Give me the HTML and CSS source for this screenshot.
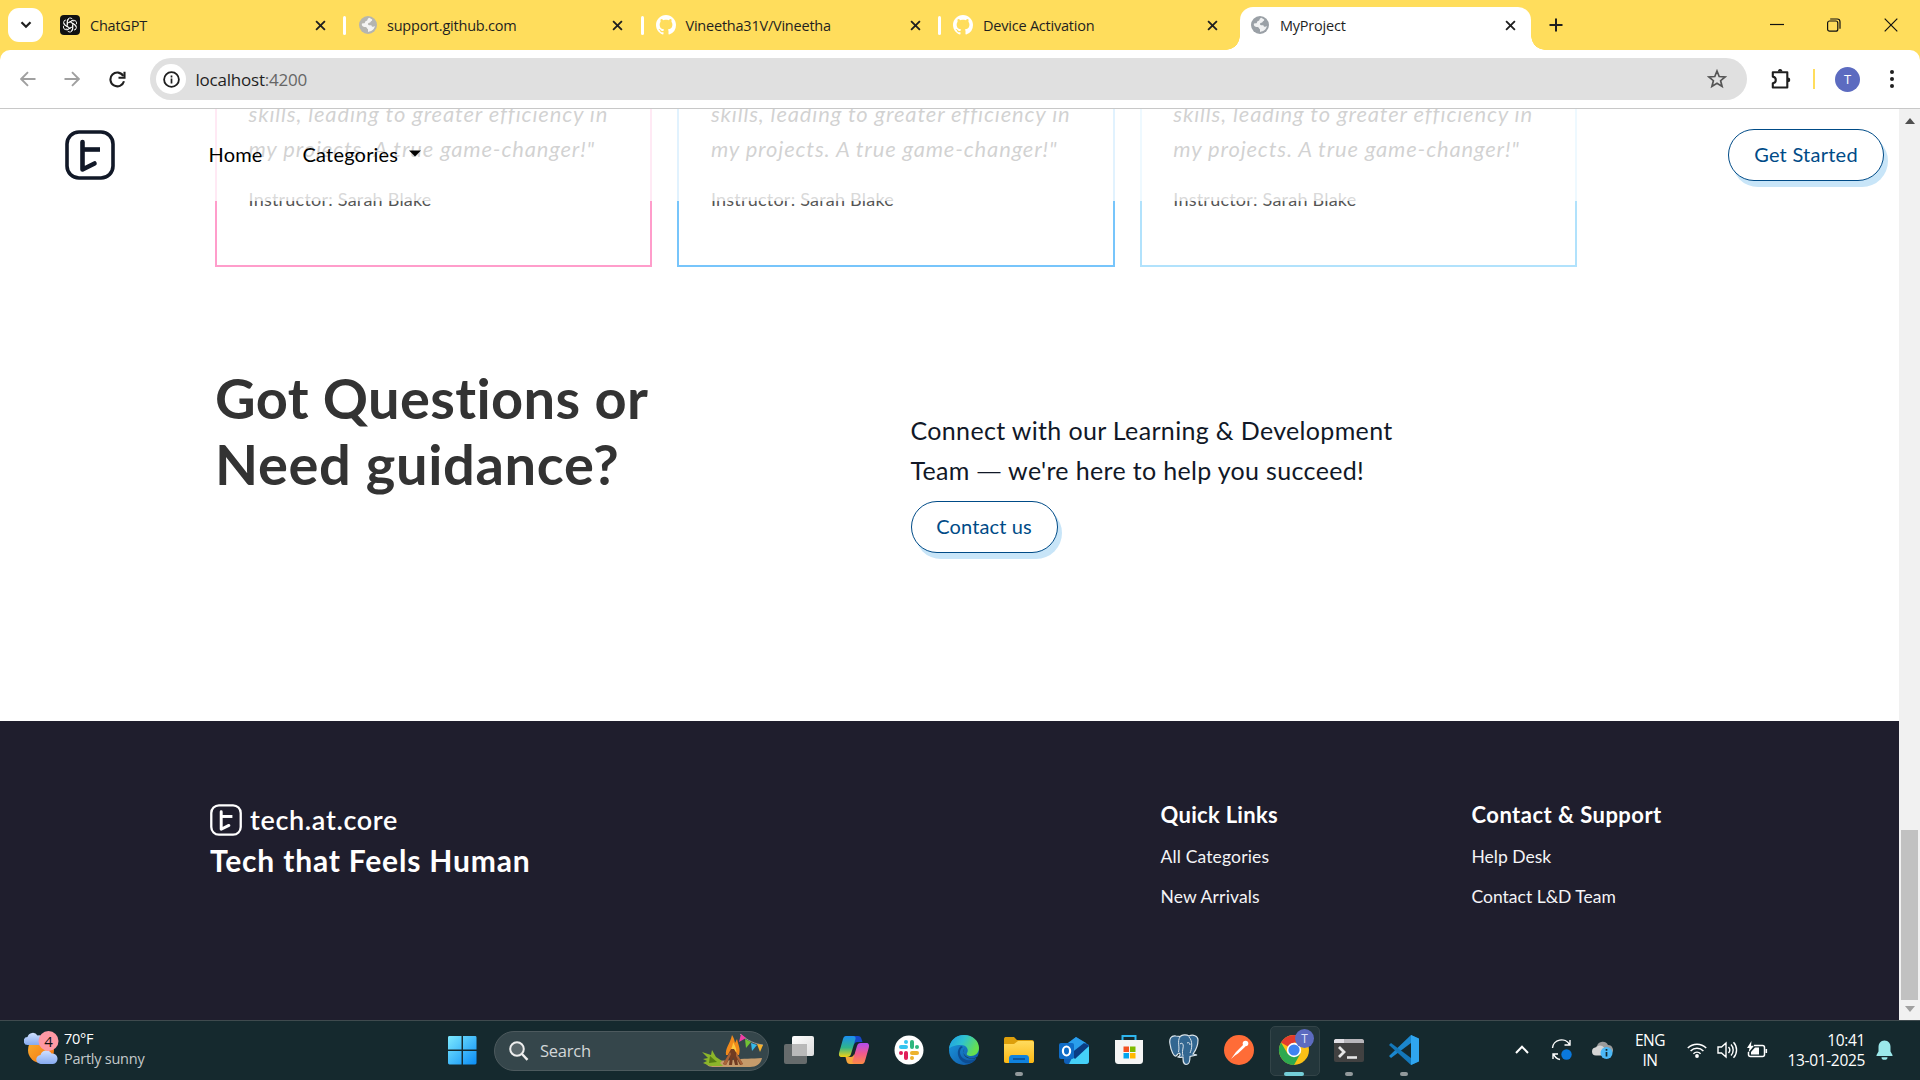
FILE: index.html
```html
<!DOCTYPE html>
<html lang="en">
<head>
<meta charset="utf-8">
<title>MyProject</title>
<link rel="stylesheet" href="styles.css">
</head>
<body>
<svg width="0" height="0" class="defs">
  <defs>
    <linearGradient id="gWin" x1="0" y1="0" x2="1" y2="1"><stop offset="0" stop-color="#7deaff"/><stop offset="1" stop-color="#0a8cf5"/></linearGradient>
    <linearGradient id="gSun" x1="0" y1="0" x2="1" y2="1"><stop offset="0" stop-color="#f9b233"/><stop offset="1" stop-color="#f4700b"/></linearGradient>
    <linearGradient id="gCloud" x1="0" y1="0" x2="0" y2="1"><stop offset="0" stop-color="#cfe0ff"/><stop offset="1" stop-color="#86aaf0"/></linearGradient>
    <linearGradient id="gTask" x1="0" y1="0" x2="1" y2="1"><stop offset="0" stop-color="#fff"/><stop offset="1" stop-color="#dcdcdc"/></linearGradient>
    <linearGradient id="gCopA" x1="0" y1="0" x2="0" y2="1"><stop offset="0" stop-color="#1b8ef2"/><stop offset=".55" stop-color="#2fb58b"/><stop offset="1" stop-color="#f2d313"/></linearGradient>
    <linearGradient id="gCopB" x1="0" y1="0" x2="0" y2="1"><stop offset="0" stop-color="#b04cf0"/><stop offset=".5" stop-color="#f0598d"/><stop offset="1" stop-color="#fb8a45"/></linearGradient>
    <linearGradient id="gEdgeA" x1="0" y1="0" x2="1" y2=".4"><stop offset="0" stop-color="#1c9be6"/><stop offset=".5" stop-color="#2fc2cf"/><stop offset="1" stop-color="#66e04e"/></linearGradient>
    <linearGradient id="gEdgeB" x1="0" y1="0" x2="1" y2="1"><stop offset="0" stop-color="#1b9de2"/><stop offset="1" stop-color="#0f4fa0"/></linearGradient>
    <linearGradient id="gFold" x1="0" y1="0" x2="0" y2="1"><stop offset="0" stop-color="#ffdb5e"/><stop offset="1" stop-color="#fcb813"/></linearGradient>
    <symbol id="close" viewBox="0 0 12 12"><path d="M1.2 1.2l9.6 9.6M10.8 1.2L1.2 10.8" stroke="#1f1f1f" stroke-width="2" fill="none"/></symbol>
    <symbol id="globe" viewBox="0 0 18 18"><circle cx="9" cy="9" r="9" fill="currentColor"/><path d="M10.2 1.8c-2.6 1.2-.9 3-3.100 3.200-1.600.2-.4 2.200-2.200 2.300L3 7.400c-.8 2 1 3.600 3.600 3.500 1.800.2 1.100 2 2.400 2.300v2.700c3.600-.2 6.400-2.700 6.800-5.800-1.400 1.300-3.200.8-3.400-.9-1.500-.2-3.200.5-3.400-1.300.1-1.600 2.400-.8 2.700-2.100.1-.9 1.700-.8 1.500-2.400z" fill="#fff" opacity=".85"/></symbol>
    <symbol id="octocat" viewBox="0 0 16 16"><path fill="#fff" d="M8 0C3.580 0 0 3.580 0 8c0 3.540 2.290 6.530 5.470 7.590.4.070.55-.17.55-.38 0-.19-.01-.82-.01-1.490-2.010.37-2.530-.49-2.690-.94-.09-.23-.48-.94-.82-1.130-.28-.15-.68-.52-.01-.53.63-.01 1.080.58 1.230.82.72 1.210 1.870.87 2.330.66.070-.52.28-.87.510-1.070-1.780-.2-3.640-.89-3.640-3.950 0-.87.31-1.590.82-2.150-.08-.2-.36-1.020.08-2.120 0 0 .67-.21 2.200.82.64-.18 1.320-.27 2-.27s1.360.09 2 .27c1.530-1.040 2.200-.82 2.200-.82.44 1.100.16 1.920.08 2.120.51.56.82 1.270.82 2.150 0 3.070-1.870 3.750-3.650 3.950.29.25.54.73.54 1.480 0 1.070-.01 1.930-.01 2.200 0 .21.15.46.55.38A8.010 8.010 0 0016 8c0-4.420-3.580-8-8-8z"/></symbol>
    <symbol id="brand" viewBox="0 0 50 50"><rect x="2" y="2" width="46" height="46" rx="12" fill="none" stroke="currentColor" stroke-width="3.600"/><path d="M17.500 12v27.500L29.500 33.500" fill="none" stroke="currentColor" stroke-width="4.600" stroke-linecap="round" stroke-linejoin="round"/><path d="M17.500 19.500H35" stroke="currentColor" stroke-width="4.600"/></symbol>
  </defs>
</svg>

<div class="screen">
  <header class="tabstrip">
    <button class="tab-search"><svg width="12" height="8" viewBox="0 0 12 8"><path d="M1.500 1.200L6 5.800l4.500-4.600" fill="none" stroke="#1f1f1f" stroke-width="2.200"/></svg></button>
    <div class="tab first">
      <svg class="fav" width="20" height="20" viewBox="0 0 20 20"><rect width="20" height="20" rx="4" fill="#111"/><g fill="none" stroke="#fff" stroke-width=".9"><path id="pt" d="M7.300 10V5.600A2.900 2.900 0 0112.400 4M7.300 8.400l3.900-2.300a2.900 2.900 0 013 0"/><use href="#pt" transform="rotate(60 10 10)"/><use href="#pt" transform="rotate(120 10 10)"/><use href="#pt" transform="rotate(180 10 10)"/><use href="#pt" transform="rotate(240 10 10)"/><use href="#pt" transform="rotate(300 10 10)"/></g></svg>
      <span class="tab-title">ChatGPT</span><svg class="x"><use href="#close"/></svg>
    </div>
    <div class="tab divided"><svg class="fav globe"><use href="#globe"/></svg><span class="tab-title">support.github.com</span><svg class="x"><use href="#close"/></svg></div>
    <div class="tab divided"><svg class="fav"><use href="#octocat"/></svg><span class="tab-title">Vineetha31V/Vineetha</span><svg class="x"><use href="#close"/></svg></div>
    <div class="tab divided"><svg class="fav"><use href="#octocat"/></svg><span class="tab-title">Device Activation</span><svg class="x"><use href="#close"/></svg></div>
    <div class="tab active"><svg class="fav globe dark"><use href="#globe"/></svg><span class="tab-title">MyProject</span><svg class="x"><use href="#close"/></svg></div>
    <svg class="plus" width="14" height="14" viewBox="0 0 14 14"><path d="M7 .5v13M.5 7h13" stroke="#1f1f1f" stroke-width="2"/></svg>
    <div class="window-buttons">
      <svg width="14" height="14" viewBox="0 0 14 14"><path d="M0 6.500h14" stroke="#111" stroke-width="1.200"/></svg>
      <svg width="14" height="14" viewBox="0 0 14 14"><rect x=".6" y="3" width="10.200" height="10.200" rx="2" fill="none" stroke="#111" stroke-width="1.200"/><path d="M3.200 1h7a2.800 2.800 0 012.800 2.800v7" fill="none" stroke="#111" stroke-width="1.200"/></svg>
      <svg width="14" height="14" viewBox="0 0 14 14"><path d="M.7.7l12.600 12.600M13.300.7L.7 13.300" stroke="#111" stroke-width="1.200"/></svg>
    </div>
  </header>

  <div class="toolbar-back">
    <div class="toolbar">
      <svg class="back" width="16" height="16" viewBox="0 0 16 16"><path d="M15.500 8H2M8 1.200L1.200 8 8 14.800" fill="none" stroke="#a0a0a0" stroke-width="1.900"/></svg>
      <svg class="forward" width="16" height="16" viewBox="0 0 16 16"><path d="M.5 8H14M8 1.200L14.800 8 8 14.800" fill="none" stroke="#a0a0a0" stroke-width="1.900"/></svg>
      <svg class="reload" width="17" height="17" viewBox="0 0 17 17"><path d="M14.300 5A6.900 6.900 0 1015 10.300" fill="none" stroke="#1f1f1f" stroke-width="2.100"/><path d="M15.500.8v6H9.500" fill="none" stroke="#1f1f1f" stroke-width="2.100"/></svg>
      <div class="omnibox">
        <span class="info"><svg width="17" height="17" viewBox="0 0 17 17"><circle cx="8.500" cy="8.500" r="7.400" fill="none" stroke="#1f1f1f" stroke-width="1.800"/><path d="M8.500 7.600v4.800M8.500 4.600v1.800" stroke="#1f1f1f" stroke-width="1.700"/></svg></span>
        <span class="url">localhost<i>:4200</i></span>
        <svg class="star" width="20" height="20" viewBox="0 0 20 20"><path d="M10 2l2.200 5.500 5.900.4-4.500 3.800 1.500 5.800L10 14.300l-5.100 3.200 1.500-5.800L1.900 7.900l5.900-.4z" fill="none" stroke="#555" stroke-width="1.700"/></svg>
      </div>
      <svg class="puzzle" width="22" height="22" viewBox="0 0 22 22"><path d="M2.800 4.200h14.500v15.300H2.800v-4.300c4-.6 4-6 0-6.600z" fill="none" stroke="#1f1f1f" stroke-width="2.100" stroke-linejoin="round"/><path d="M7.800 3.600a2.300 2.600 0 014.600 0zM17.800 9.500a2.500 2.400 0 010 4.800z" fill="#1f1f1f"/></svg>
      <span class="toolbar-divider"></span>
      <span class="avatar">T</span>
      <svg class="dots" width="4" height="18" viewBox="0 0 4 18"><g fill="#1f1f1f"><circle cx="2" cy="2" r="2"/><circle cx="2" cy="9" r="2"/><circle cx="2" cy="16" r="2"/></g></svg>
    </div>
  </div>

  <div class="viewport">
    <main class="page">
      <nav class="navbar">
        <svg class="nav-logo"><use href="#brand"/></svg>
        <a class="nav-home">Home</a>
        <a class="nav-cat">Categories</a>
        <svg class="caret" width="12" height="7" viewBox="0 0 12 7"><path d="M0 .5h12L6 6.500z" fill="#000"/></svg>
        <button class="pill nav-cta"><span>Get Started</span></button>
      </nav>
      <section class="cards">
        <article class="card pink"><p class="quote">skills, leading to greater efficiency in<br>my projects. A true game-changer!"</p><p class="teacher">Instructor: Sarah Blake</p></article>
        <article class="card blue"><p class="quote">skills, leading to greater efficiency in<br>my projects. A true game-changer!"</p><p class="teacher">Instructor: Sarah Blake</p></article>
        <article class="card sky"><p class="quote">skills, leading to greater efficiency in<br>my projects. A true game-changer!"</p><p class="teacher">Instructor: Sarah Blake</p></article>
      </section>
      <section class="questions">
        <h1>Got Questions or<br><span class="h1-second">Need guidance?</span></h1>
        <div class="connect">
          <p>Connect with our Learning &amp; Development<br>Team <span class="dash">—</span> we're here to help you succeed!</p>
          <button class="pill contact"><span>Contact us</span></button>
        </div>
      </section>
      <footer class="footer">
        <div class="footer-brand">
          <div class="brand-row"><svg class="foot-logo"><use href="#brand"/></svg><span>tech.at.core</span></div>
          <p class="tagline">Tech that Feels Human</p>
        </div>
        <div class="footer-col quick"><h2>Quick Links</h2><a>All Categories</a><a>New Arrivals</a></div>
        <div class="footer-col support"><h2>Contact &amp; Support</h2><a>Help Desk</a><a>Contact L&amp;D Team</a></div>
      </footer>
    </main>
    <div class="scrollbar">
      <svg width="10" height="6" viewBox="0 0 10 6"><path d="M0 6L5 0l5 6z" fill="#4f4f4f"/></svg>
      <span class="thumb"></span>
      <svg width="10" height="6" viewBox="0 0 10 6"><path d="M0 0h10L5 6z" fill="#a0a0a0"/></svg>
    </div>
  </div>

  <div class="taskbar">
    <div class="weather">
      <svg width="37" height="38" viewBox="0 0 37 38"><circle cx="17" cy="20" r="13" fill="url(#gSun)"/><path d="M4 15a4 4 0 01-.5-8 5.500 5.500 0 0110-1.500A5 5 0 0117 15z" fill="url(#gCloud)"/><path d="M17 34a4.500 4.500 0 01-.5-9 6 6 0 0111-1.500A5 5 0 0129 34z" fill="url(#gCloud)"/><circle cx="24.500" cy="11" r="10" fill="#ff99a4"/><text x="24.500" y="16.500" text-anchor="middle" class="badge-num">4</text></svg>
      <div class="weather-text"><span class="temp">70°F</span><span class="sky-state">Partly sunny</span></div>
    </div>
    <svg class="start" width="30" height="30" viewBox="0 0 30 30"><path d="M1.500 0H14v14H0V1.500A1.500 1.500 0 011.500 0zM15.500 0H28A1.500 1.500 0 0129.500 1.500V14h-14zM0 15.500h14v14H1.500A1.500 1.500 0 010 28zM15.500 15.500h14V28a1.500 1.500 0 01-1.500 1.500H15.500z" fill="url(#gWin)"/></svg>
    <div class="search">
      <svg width="20" height="20" viewBox="0 0 20 20"><circle cx="8" cy="8" r="6.800" fill="#59666a" stroke="#eee" stroke-width="2"/><path d="M13 13l5.500 5.800" stroke="#eee" stroke-width="2.400"/></svg>
      <span>Search</span>
      <svg class="camp" width="62" height="36" viewBox="0 0 62 36"><path d="M4 30c8-3 20-2 26-3 12-2 20-1 30-2-1 6-6 9-12 9H12c-4 0-7-1-8-4z" fill="#c69b6b"/><path d="M0 19l9 3 1-5 4 7 6 4-2 2 3 3H8l-7-3 4-2-4-2 5-1z" fill="#8cb52a"/><path d="M7 30l8-1-7-6z" fill="#557d13"/><path d="M24 22c-1-7 4-11 6-20 3 5 3 8 3 8l2-4c1 6 4 9 2 16z" fill="#f28a1c"/><path d="M28 22c0-6 3-8 3-13 3 5 4 8 3 13z" fill="#ffc83d"/><path d="M21 31l8-15h3l9 15-3 1-3-6 1 6h-3l-2-8-1 8h-3l1-8-4 8z" fill="#713b22"/><path d="M21 31l7-12 1 2-5 11zM41 31l-7-12 0 4 5 9z" fill="#a86339"/><path d="M38 1c8 7 15 10 23 11" stroke="#999" fill="none"/><path d="M39 1l5 4-7 4z" fill="#f03fa5"/><path d="M43 6l6 3-5 6z" fill="#72c235"/><path d="M49 10l6 2-5 6z" fill="#35b8ea"/><path d="M55 11l6 1-3 7z" fill="#f6b12d"/></svg>
    </div>
    <div class="apps">
      <div class="app"><svg viewBox="0 0 32 32"><rect x="1" y="10" width="23" height="20" rx="2" fill="#666b6c"/><rect x="9" y="2" width="22" height="20" rx="2" fill="url(#gTask)"/><path d="M9 10h15v12H9z" fill="#b9b9b9"/></svg></div>
      <div class="app"><svg viewBox="0 0 32 32"><path d="M11 2h9c2 0 3 1 3.500 3l1 3h-5c-2 0-3 1-3.600 3L14 2z" fill="#1646c8"/><path d="M8 2h7c2 0 3 1 2.500 3L13 20c-.6 2-1.500 3-4 3H4c-3 0-3.500-2-2.700-5L5 5c.5-2 1.500-3 3-3z" fill="url(#gCopA)"/><path d="M21 30h-9c-2 0-3-1-3.500-3l-1-4h5c2 0 3-1 3.600-3z" fill="#f5a53c"/><path d="M24 30h-7c-2 0-3-1-2.500-3L19 12c.6-2 1.500-3 4-3h5c3 0 3.500 2 2.700 5L27 27c-.5 2-1.500 3-3 3z" fill="url(#gCopB)"/></svg></div>
      <div class="app"><svg viewBox="0 0 32 32"><circle cx="16" cy="16" r="14.500" fill="#fff"/><g stroke-width="4" stroke-linecap="round"><path d="M8 13h5" stroke="#36c5f0"/><path d="M13 8v.1" stroke="#36c5f0"/><path d="M19 8v5" stroke="#2eb67d"/><path d="M24 13v.1" stroke="#2eb67d"/><path d="M19 19h5" stroke="#ecb22e"/><path d="M19 24v.1" stroke="#ecb22e"/><path d="M13 19v5" stroke="#e01e5a"/><path d="M8 19v.1" stroke="#e01e5a"/></g></svg></div>
      <div class="app"><svg viewBox="0 0 32 32"><circle cx="16" cy="16" r="15" fill="url(#gEdgeB)"/><path d="M1 15C2 6 8 1 16 1c9 0 15 6 15 13 0 5-4 8-8 8-3 0-5-1-4-3 2-3 0-8-6-8C7 11 2 13 1 15z" fill="url(#gEdgeA)"/><path d="M13 12c-5 4-4 12 2 16 4 2 9 2 13-3-6 3-15 1-16-6-.1-3 1-5 3-6z" fill="#0d4d92"/><path d="M17 14c-3 3-2 8 4 10 4 1 7 0 9.500-2l2-1-3 5-1.500-2c-6 2-13-1-12.500-6 .2-2 .5-3 1.500-4z" fill="#15292e"/></svg></div>
      <div class="app running"><svg viewBox="0 0 32 32"><path d="M1 5c0-1.500 1-2 2-2h8l3 3h15c1.500 0 2 1 2 2v6H1z" fill="#dd9f0b"/><path d="M1 10h10l4-3h14c1.500 0 2 1 2 2v18c0 1.500-1 2-2 2H3c-1.500 0-2-1-2-2z" fill="url(#gFold)"/><path d="M6 29v-5c0-1.500 1-3 3-3h14c2 0 3 1.500 3 3v5z" fill="#1082dd"/><path d="M10 25h12" stroke="#0b4d91" stroke-width="1.600"/></svg></div>
      <div class="app"><svg viewBox="0 0 32 32"><path d="M6 12L18 3l13 8v16c0 2-1 3-3 3H9c-2 0-3-1-3-3z" fill="#0f5fb8"/><path d="M6 12L18 3l10 6-14 11z" fill="#2a9fec"/><path d="M14 24l17-12v15c0 2-1 3-3 3H11z" fill="#45d0f7"/><path d="M12 20L26 9l5 3-14 13z" fill="#0a3c83"/><rect x="1" y="9" width="15" height="16" rx="2" fill="#0f6cc7"/><ellipse cx="8.500" cy="17" rx="3.600" ry="4.500" fill="none" stroke="#fff" stroke-width="2.200"/></svg></div>
      <div class="app"><svg viewBox="0 0 32 32"><path d="M9.500 8V2h13v6" fill="none" stroke="#2eb6ee" stroke-width="2"/><path d="M2 6h28v20c0 3-1 4-4 4H6c-3 0-4-1-4-4z" fill="#f5f5f5"/><path d="M10.500 12.500h5.500v5.500h-5.500z" fill="#f25022"/><path d="M17 12.500h5.500v5.500H17z" fill="#7fba00"/><path d="M10.500 19h5.500v5.500h-5.500z" fill="#00a4ef"/><path d="M17 19h5.500v5.500H17z" fill="#ffb900"/></svg></div>
      <div class="app"><svg viewBox="0 0 32 32"><path d="M8 2C3 1 1 5 2 10c1 7 4 13 6 12 1-.5 2-3 3-3 2 1 1 3-1 4 2 1 4 0 5 0 0 4 0 7 3 7.500 3 0 4-2 4-8l7-1.500-4-1c3-4 5-10 5-14 0-4-5-6-9-4-3-2-7-1-9 .5C11 2 10 2 8 2z" fill="#336791" stroke="#dbe4ea" stroke-width="1.200"/><path d="M12 3c-3 4 0 10-1.500 15M21 3c4 4 3 12 1 16M12 10c2-2 4 0 3 4-.4 3-1 4 0 8M19 9c2-1 3 0 3 2" fill="none" stroke="#dbe4ea" stroke-width="1"/></svg></div>
      <div class="app"><svg viewBox="0 0 32 32"><circle cx="16" cy="16" r="15" fill="#ff6c37"/><path d="M8 25l5-7 7.500-7.500 2 2-7.500 7-3 2z" fill="#fff"/><circle cx="22.500" cy="9.500" r="2.800" fill="#fff"/></svg></div>
      <div class="app running current"><svg viewBox="0 0 32 32"><circle cx="16" cy="16" r="15" fill="#fbc116"/><path d="M16 16L3 8.500A15 15 0 0129 8.500H16z" fill="#e33b2e"/><path d="M3 8.500A15 15 0 0016 31l6.500-11.500H9.500z" fill="#2da94f"/><circle cx="16" cy="16" r="7.200" fill="#fff"/><circle cx="16" cy="16" r="5.600" fill="#3f83f1"/></svg><span class="profile">T</span></div>
      <div class="app running"><svg viewBox="0 0 32 32"><rect x="1" y="5" width="30" height="23" rx="2" fill="#414141"/><path d="M1 9V7c0-1 1-2 2-2h26c1 0 2 1 2 2v2z" fill="#b8b6bb"/><path d="M1 9V7c0-1 1-2 2-2h8v4z" fill="#e0dee4"/><path d="M6 13l5 5-5 5" fill="none" stroke="#e6e6e6" stroke-width="2.800"/><path d="M14 23.500h10" stroke="#e6e6e6" stroke-width="2.600"/></svg></div>
      <div class="app running"><svg viewBox="0 0 32 32"><path d="M23 1l7 3.500v23L23 31V9L3 24l-2-2z" fill="#1b87ce"/><path d="M23 31L1 11l2-2 20 15z" fill="#1478bb"/><path d="M23 1l8 3.500v23L23 31z" fill="#2fa5f0"/></svg></div>
    </div>
    <div class="tray">
      <svg class="chev" width="14" height="9" viewBox="0 0 14 9"><path d="M1 8l6-6.300L13 8" fill="none" stroke="#fff" stroke-width="2"/></svg>
      <svg class="sync" width="22" height="22" viewBox="0 0 22 22"><path d="M1.500 9A9 8.500 0 0118.500 5.500M19 1v5h-5.500M9 20.500A9 9 0 012.500 15M2 20v-5h5" fill="none" stroke="#fff" stroke-width="1.400"/><circle cx="15.500" cy="15.500" r="5.200" fill="#0a78dc"/></svg>
      <svg class="cloud" width="21" height="20" viewBox="0 0 21 20"><path d="M5 13a4.500 4.500 0 010-8 6 6 0 0111-1 5 5 0 013 9z" fill="#9b9b9b"/><path d="M4 14.500a4 4 0 010-8 5 5 0 018 0v8z" fill="#d4d4d4"/><circle cx="14.500" cy="12" r="6" fill="#4cb8f5"/><path d="M14.500 11v4.500M14.500 8v1.800" stroke="#15292e" stroke-width="1.700"/></svg>
      <div class="lang"><span>ENG</span><span>IN</span></div>
      <svg class="wifi" width="20" height="16" viewBox="0 0 20 16"><g fill="none" stroke="#fff" stroke-width="1.500"><path d="M.8 6a13 13 0 0118.400 0"/><path d="M3.600 9a9 9 0 0112.800 0"/><path d="M6.400 11.800a5.200 5.200 0 017.200 0"/></g><circle cx="10" cy="14" r="1.900" fill="#fff"/></svg>
      <svg class="vol" width="21" height="18" viewBox="0 0 21 18"><g fill="none" stroke="#fff" stroke-width="1.400"><path d="M1 6h3.500L9 2v14l-4.500-4H1zM11.500 6a4.500 4.500 0 010 6M14 3.500a8 8 0 010 11M16.500 1.200a11.500 11.500 0 010 15.600"/></g></svg>
      <svg class="bat" width="21" height="18" viewBox="0 0 21 18"><path d="M7 4.500h8.500c1.500 0 2 1 2 2v7c0 1-.8 2-2 2H3.500c-1.500 0-2-1-2-2V11" fill="none" stroke="#fff" stroke-width="1.500"/><path d="M18.500 8h1.600v4h-1.600zM8 6.500h4v7H4V11z" fill="#fff"/><path d="M4.500 0L0 7h2.500L1.500 11.500 7 4.800H4z" fill="#fff"/></svg>
      <div class="clock"><span>10:41</span><span class="date">13-01-2025</span></div>
      <svg class="bell" width="17" height="20" viewBox="0 0 17 20"><path d="M8.500.5c4 0 6 3 6 6.500v4.500L16.500 15v1h-16v-1l2-3.500V7c0-3.500 2-6.500 6-6.500z" fill="#9be8ea"/><path d="M5.500 17.200h6a3 2.600 0 01-6 0z" fill="#9be8ea"/></svg>
    </div>
  </div>
</div>
</body>
</html>
```

FILE: styles.css
```css
* { box-sizing: border-box; margin: 0; padding: 0; }
body { width: 1920px; height: 1080px; overflow: hidden; font-family: "Open Sans", "Noto Sans", sans-serif; background: #fff; }
button { font: inherit; border: 0; background: none; }
svg { display: block; flex: none; }
.defs { position: absolute; }
.screen { display: flex; flex-direction: column; width: 1920px; height: 1080px; }

/* Tab strip */
.tabstrip { display: flex; align-items: center; height: 50px; background: #ffdd5c; padding-left: 8px; flex: none; }
.tab-search { width: 35px; height: 34px; border-radius: 11px; background: #fff; display: flex; align-items: center; justify-content: center; }
.tab { display: flex; align-items: center; width: 297.5px; height: 50px; padding: 0 21px 0 12px; font-size: 14.5px; letter-spacing: -.22px; color: #1f1f1f; position: relative; }
.tab.first { width: 300px; padding: 0 17px 0 17px; }
.tab.divided::before { content: ""; width: 3px; height: 19px; border-radius: 2px; background: #fff; margin: 0 12px 0 -12px; }
.tab.divided { width: 297.5px; padding-right: 17.500px; }
.tab.active { background: #fff; height: 43px; align-self: flex-end; border-radius: 13px 13px 0 0; padding: 0 15.500px 7px 11px; width: 291px; margin-left: 4.500px; }
.tab.active::before, .tab.active::after { content: ""; position: absolute; bottom: 0; width: 14px; height: 14px; }
.tab.active::before { left: -14px; background: radial-gradient(circle at 0 0, transparent 13.500px, #fff 14px); }
.tab.active::after { right: -14px; background: radial-gradient(circle at 100% 0, transparent 13.500px, #fff 14px); }
.fav { width: 20px; height: 20px; margin-right: 10px; }
.fav.globe { width: 18px; height: 18px; color: #b5b5b0; margin-left: 1px; margin-right: 10px; }
.fav.globe.dark { color: #9aa0a6; margin-left: 0; margin-right: 11px; }
.tab-title { flex: 1; white-space: nowrap; }
.x { width: 11px; height: 11px; }
.plus { margin-left: 17.500px; }
.window-buttons { display: flex; gap: 43px; margin-left: auto; padding-right: 22px; }

/* Toolbar */
.toolbar-back { background: #ffdd5c; height: 59px; flex: none; }
.toolbar { display: flex; align-items: center; height: 59px; background: #fff; border-radius: 10px 10px 0 0; border-bottom: 1px solid #c8c8c8; padding-left: 20px; }
.forward { margin-left: 28px; }
.reload { margin-left: 29px; }
.omnibox { margin-left: 24px; width: 1597px; height: 42px; background: #e0e0e0; border-radius: 21px; display: flex; align-items: center; padding: 0 20px 0 6px; }
.info { width: 30px; height: 30px; border-radius: 50%; background: #fff; display: flex; align-items: center; justify-content: center; }
.url { flex: 1; margin-left: 9.500px; font-size: 17px; letter-spacing: -.22px; color: #1f1f1f; }
.url i { font-style: normal; color: #666; }
.puzzle { margin-left: 23px; }
.toolbar-divider { width: 2px; height: 20px; background: #ffdd5c; margin-left: 21px; }
.avatar { width: 25px; height: 25px; border-radius: 50%; background: #5c6bc0; color: #fff; font-size: 13px; line-height: 25px; text-align: center; margin-left: 20px; }
.dots { margin-left: 30px; }

/* Page */
.viewport { display: flex; height: 911px; overflow: hidden; flex: none; }
.page { width: 1899px; display: flex; flex-direction: column; position: relative; font-family: Lato, "Open Sans", sans-serif; }
.navbar { position: absolute; left: 0; top: 0; width: 100%; height: 92px; background: rgba(255,255,255,.78); display: flex; align-items: center; padding: 0 15px 0 65px; font-size: 20px; color: #000; letter-spacing: .2px; }
.nav-logo { width: 50px; height: 50px; color: #111827; }
.nav-home { margin: -3px 0 0 93.500px; width: 94px; }
.nav-cat { margin-top: -3px; width: 106.500px; }
.caret { margin-top: -4px; }
.nav-cta { width: 156px; margin-left: auto; }
.pill { height: 52px; border: 1.500px solid #004b87; border-radius: 26px; background: #fff; color: #004b87; font-size: 20px; line-height: 24px; padding-bottom: 3px; box-shadow: 4px 6px 0 #c8e5f8; letter-spacing: .25px; white-space: nowrap; }
.cards { display: flex; gap: 25px; height: 158px; padding-left: 215px; flex: none; }
.card { width: 437.400px; height: 158px; border: 2px solid; border-top: 0; padding: 0 31.500px; }
.card.pink { border-color: #ff9dcb; }
.card.blue { border-color: #77c5fb; }
.card.sky { border-color: #b1e2fc; }
.quote { margin-top: -13px; font-size: 22px; line-height: 35px; font-style: italic; color: #333; letter-spacing: .83px; white-space: nowrap; }
.teacher { margin-top: 19.500px; font-size: 18px; line-height: 27px; color: #555; letter-spacing: .22px; }
.questions { display: flex; height: 454px; padding-left: 215px; flex: none; }
.questions h1 { width: 695.500px; padding-top: 98px; font-size: 56px; line-height: 66px; color: #333; letter-spacing: .36px; white-space: nowrap; }
.h1-second { letter-spacing: .65px; }
.connect { padding-top: 143px; color: #111827; font-size: 25px; line-height: 40px; letter-spacing: .34px; white-space: nowrap; }
.dash { font-family: "Open Sans", sans-serif; font-weight: 300; line-height: 1; }
.contact { display: block; width: 147px; margin-top: 11px; letter-spacing: .1px; }
.footer { display: flex; flex: 1; background: #1f1e2d; color: #fff; padding-left: 210px; }
.footer-brand { width: 950.500px; padding-top: 83px; }
.brand-row { display: flex; align-items: center; height: 32px; gap: 8px; font-size: 27px; font-weight: 600; letter-spacing: .65px; line-height: 32px; }
.brand-row span { margin-top: -1px; }
.foot-logo { width: 32px; height: 32px; }
.tagline { font-size: 30px; line-height: 35px; margin-top: 7px; font-weight: 700; letter-spacing: .82px; }
.footer-col { display: flex; flex-direction: column; padding-top: 81px; }
.footer-col.quick { width: 311px; }
.footer-col h2 { font-size: 22px; line-height: 26px; margin-bottom: 8.500px; letter-spacing: .3px; }
.footer-col.support h2 { letter-spacing: .47px; }
.footer-col a { font-size: 17.500px; line-height: 40px; color: #f4f4f6; letter-spacing: .15px; }
.footer-col.support a { letter-spacing: 0; }
.scrollbar { width: 21px; background: #f1f1f1; display: flex; flex-direction: column; align-items: center; padding: 9px 0 8px; }
.thumb { width: 17px; height: 170px; background: #c1c1c1; margin: auto 0 6px; }

/* Taskbar */
.taskbar { height: 60px; background: #15292e; border-top: 1px solid #3f4a4e; display: flex; align-items: center; color: #fff; flex: none; }
.weather { display: flex; align-items: center; padding: 0 0 4px 24px; width: 448px; }
.badge-num { font: 15px "Open Sans", sans-serif; fill: #111; }
.weather-text { display: flex; flex-direction: column; margin: 1px 0 0 3px; font-size: 14.500px; line-height: 20px; letter-spacing: -.25px; }
.sky-state { color: #c4cacb; }
.start { width: 29px; height: 29px; }
.search { display: flex; align-items: center; width: 275px; height: 40px; margin-left: 17px; border-radius: 20px; border: 1px solid #4d5a5e; background: #35464b; padding: 0 4px 0 14px; font-size: 16.500px; color: #d2d7d8; letter-spacing: -.25px; }
.search span { margin-left: 11px; }
.camp { margin-left: auto; }
.apps { display: flex; margin-left: 2.500px; }
.app { width: 55px; height: 58px; display: flex; align-items: center; justify-content: center; position: relative; }
.app > svg { width: 32px; height: 32px; margin-bottom: 1px; }
.running::after { content: ""; position: absolute; left: 23.500px; bottom: 4px; width: 8px; height: 4px; border-radius: 2px; background: #92999b; }
.current::before { content: ""; position: absolute; inset: 4px 2px 4px 3px; border: 1px solid #334448; border-radius: 5px; background: #23363b; }
.current > svg { position: relative; }
.current::after { left: 17.500px; width: 20px; background: #74cfd8; }
.profile { position: absolute; left: 28.500px; top: 7px; width: 19px; height: 19px; border-radius: 50%; background: #5c6bc0; font-size: 12px; line-height: 19px; text-align: center; color: #dfe3f8; }
.tray { display: flex; align-items: center; margin-left: auto; padding: 0 27px 2px 0; font-size: 15.500px; line-height: 20px; }
.sync { margin-left: 22px; }
.cloud { margin-left: 19px; margin-top: 2px; }
.lang { display: flex; flex-direction: column; align-items: center; width: 32px; margin-left: 21px; letter-spacing: -.6px; }
.wifi { margin-left: 21px; }
.vol { margin-left: 10px; }
.bat { margin-left: 9px; }
.clock { display: flex; flex-direction: column; align-items: flex-end; width: 82px; margin-left: 15px; letter-spacing: -.33px; white-space: nowrap; }
.bell { margin-left: 11px; }
```
